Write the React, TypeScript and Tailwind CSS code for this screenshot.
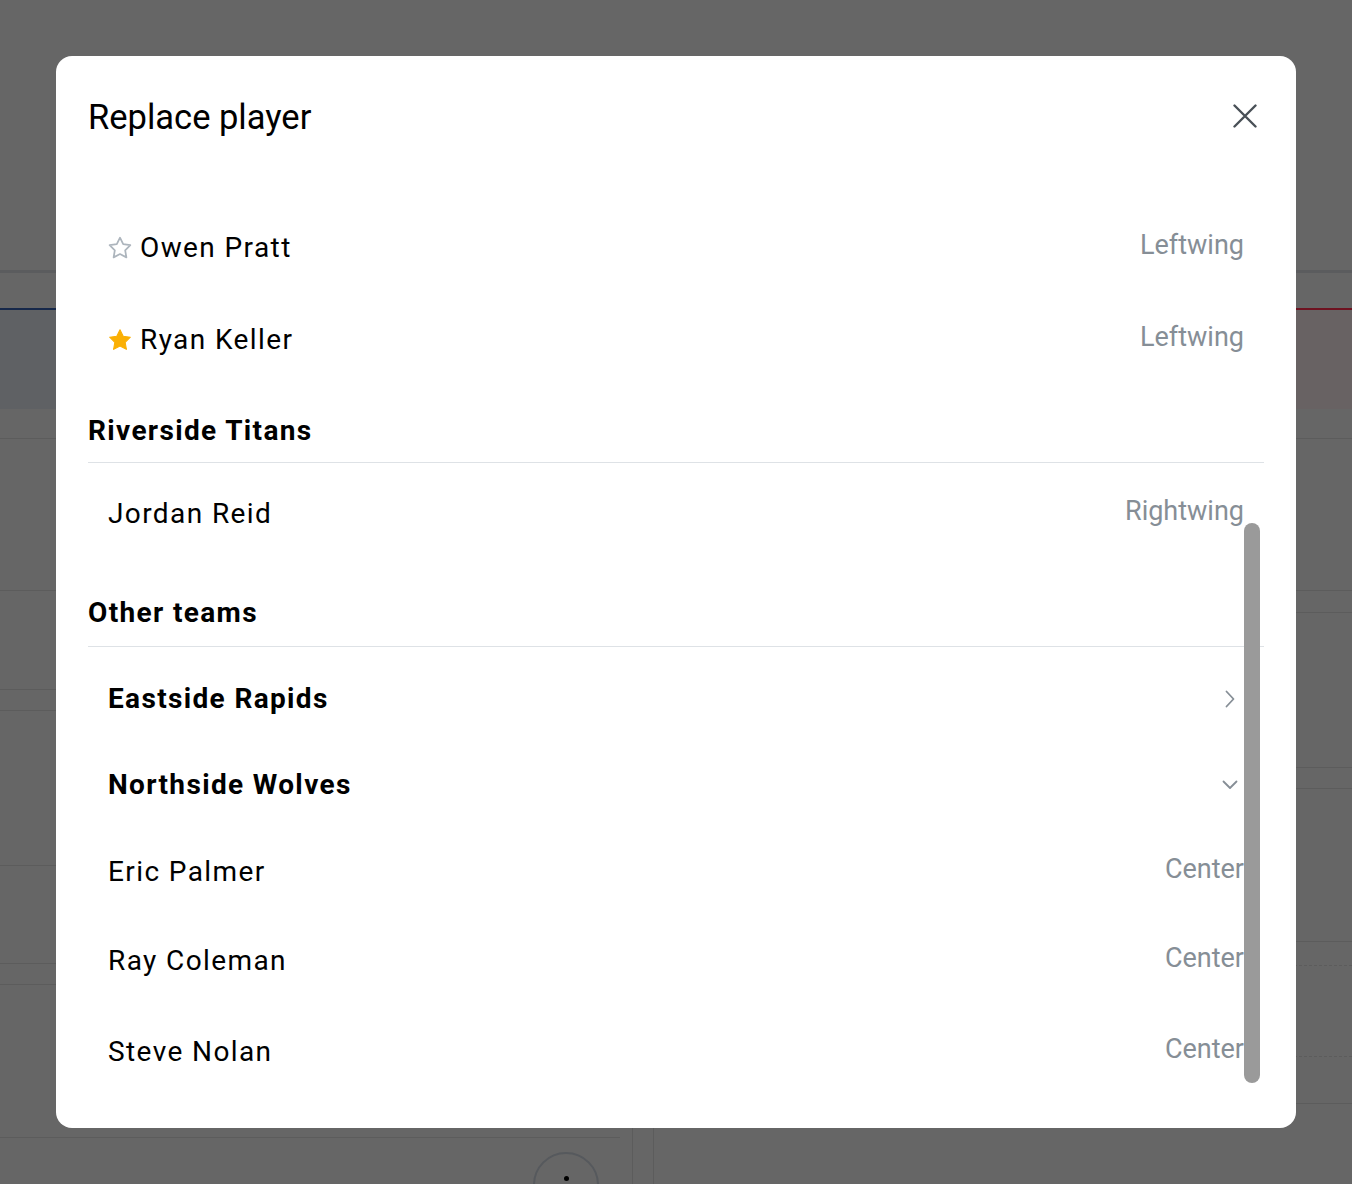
import React from "react";

const STAR = "M12 2.5l2.95 5.98 6.6.96-4.78 4.65 1.13 6.57L12 17.56l-5.9 3.1 1.13-6.57-4.78-4.65 6.6-.96L12 2.5z";

function Star({ filled }: { filled: boolean }) {
  return (
    <svg width="26" height="26" viewBox="0 0 24 24" className="-ml-[1px] shrink-0">
      <path
        d={STAR}
        fill={filled ? "#fab005" : "none"}
        stroke={filled ? "#fab005" : "#adb5bd"}
        strokeWidth={filled ? 1 : 1.6}
        strokeLinejoin="round"
      />
    </svg>
  );
}

function PlayerRow({
  name,
  pos,
  star,
  h,
  extraTop,
}: {
  name: string;
  pos: string;
  star?: "on" | "off";
  h: string;
  extraTop?: string;
}) {
  return (
    <div className={`flex items-center justify-between px-5 ${h} ${extraTop ?? ""}`}>
      <div className="flex items-center gap-[7px]">
        {star && <Star filled={star === "on"} />}
        <span className="text-[28px] leading-[40px] tracking-[1.4px] text-black">{name}</span>
      </div>
      <span className="text-[27px] leading-[40px] text-[#868e96] mb-[6px]">{pos}</span>
    </div>
  );
}

function TeamRow({ name, open }: { name: string; open: boolean }) {
  return (
    <div className="flex items-center justify-between px-5 h-[86px]">
      <span className="text-[28px] leading-[40px] tracking-[1.35px] font-bold text-black">{name}</span>
      <span className="flex w-[28px] items-center justify-center">
        {open ? (
          <svg width="16" height="10" viewBox="0 0 16 10">
            <path d="M1.5 1.5L8 8l6.5-6.5" fill="none" stroke="#868e96" strokeWidth="1.8" strokeLinecap="round" strokeLinejoin="round" />
          </svg>
        ) : (
          <svg width="10" height="18" viewBox="0 0 10 18">
            <path d="M1.5 1.5L8.5 9l-7 7.5" fill="none" stroke="#868e96" strokeWidth="1.8" strokeLinecap="round" strokeLinejoin="round" />
          </svg>
        )}
      </span>
    </div>
  );
}

function GroupHeader({ title, h, pb }: { title: string; h: string; pb: string }) {
  return (
    <div className={`flex items-end border-b border-[#dee2e6] ${pb} ${h}`}>
      <span className="text-[28px] leading-[40px] tracking-[1.35px] font-bold text-black">{title}</span>
    </div>
  );
}

function Background() {
  const line = "border-b border-[#5c5c5c]";
  return (
    <div className="flex h-[1184px] flex-col bg-[#666666]">
      <div className="h-[270px] shrink-0" />
      <div className="h-[3px] shrink-0 bg-[#5b5c5e]" />
      <div className="h-[35px] shrink-0" />
      <div className="grid h-[2px] shrink-0 grid-cols-2">
        <div className="bg-[#16284a]" />
        <div className="bg-[#6e1220]" />
      </div>
      <div className="grid h-[99px] shrink-0 grid-cols-2">
        <div className="bg-[#5f6164]" />
        <div className="bg-[#686263]" />
      </div>
      <div className={`h-[30px] shrink-0 ${line}`} />
      <div className="flex flex-1">
        <div className="flex w-[633px] shrink-0 flex-col border-r border-[#5c5c5c]">
          <div className={`h-[152px] shrink-0 ${line}`} />
          <div className={`h-[99px] shrink-0 ${line}`} />
          <div className={`h-[21px] shrink-0 ${line}`} />
          <div className={`h-[155px] shrink-0 ${line}`} />
          <div className={`h-[98px] shrink-0 ${line}`} />
          <div className={`h-[21px] shrink-0 ${line}`} />
          <div className={`mr-[12px] h-[153px] shrink-0 ${line}`} />
          <div className="flex flex-1 justify-center">
            <div className="ml-[500px] mt-[14px] flex h-[66px] w-[66px] justify-center rounded-full border-2 border-[#56595d]">
              <div className="mt-[22px] h-[5px] w-[5px] rounded-full bg-black" />
            </div>
          </div>
        </div>
        <div className="w-[21px] shrink-0 border-r border-[#5c5c5c]" />
        <div className="flex flex-1 flex-col">
          <div className={`h-[152px] shrink-0 ${line}`} />
          <div className={`h-[22px] shrink-0 ${line}`} />
          <div className={`h-[155px] shrink-0 ${line}`} />
          <div className={`h-[21px] shrink-0 ${line}`} />
          <div className={`h-[153px] shrink-0 ${line}`} />
          <div className="h-[24px] shrink-0 border-b border-dashed border-[#5c5c5c]" />
          <div className="h-[91px] shrink-0 border-b border-dashed border-[#5c5c5c]" />
          <div className={`h-[47px] shrink-0 ${line}`} />
        </div>
      </div>
    </div>
  );
}

export default function App() {
  return (
    <div className="relative h-[1184px] w-full overflow-hidden" style={{ fontFamily: "Roboto, 'Noto Sans', sans-serif" }}>
      <Background />
      <div className="fixed inset-0 flex items-center justify-center">
        <div className="flex h-[1072px] w-[1240px] flex-col rounded-2xl bg-white p-8">
          <div className="flex h-14 shrink-0 items-center justify-between">
            <h2 className="mt-[2px] text-[34.5px] leading-[48px] font-normal text-black">Replace player</h2>
            <button className="-mr-[1px] flex h-10 w-10 items-center justify-center rounded-md">
              <svg width="24" height="24" viewBox="0 0 24 24">
                <path d="M1.5 1.5L22.5 22.5M22.5 1.5L1.5 22.5" fill="none" stroke="#495057" strokeWidth="2.4" strokeLinecap="round" />
              </svg>
            </button>
          </div>
          <div className="relative flex-1 overflow-hidden">
            <div className="flex flex-col pt-[58px]">
              <PlayerRow name="Owen Pratt" pos="Leftwing" star="off" h="h-[92px]" />
              <PlayerRow name="Ryan Keller" pos="Leftwing" star="on" h="h-[92px]" />
              <GroupHeader title="Riverside Titans" h="h-[77px]" pb="pb-[11px]" />
              <PlayerRow name="Jordan Reid" pos="Rightwing" h="h-[92px]" extraTop="mt-[5px]" />
              <GroupHeader title="Other teams" h="h-[87px]" pb="pb-[13px]" />
              <div className="h-[9px]" />
              <TeamRow name="Eastside Rapids" open={false} />
              <TeamRow name="Northside Wolves" open={true} />
              <PlayerRow name="Eric Palmer" pos="Center" h="h-[87px]" />
              <PlayerRow name="Ray Coleman" pos="Center" h="h-[91px]" />
              <PlayerRow name="Steve Nolan" pos="Center" h="h-[92px]" />
            </div>
            <div className="absolute right-[4px] top-[379px] h-[560px] w-4 rounded-full bg-[#9a9a9a]" />
          </div>
        </div>
      </div>
    </div>
  );
}
